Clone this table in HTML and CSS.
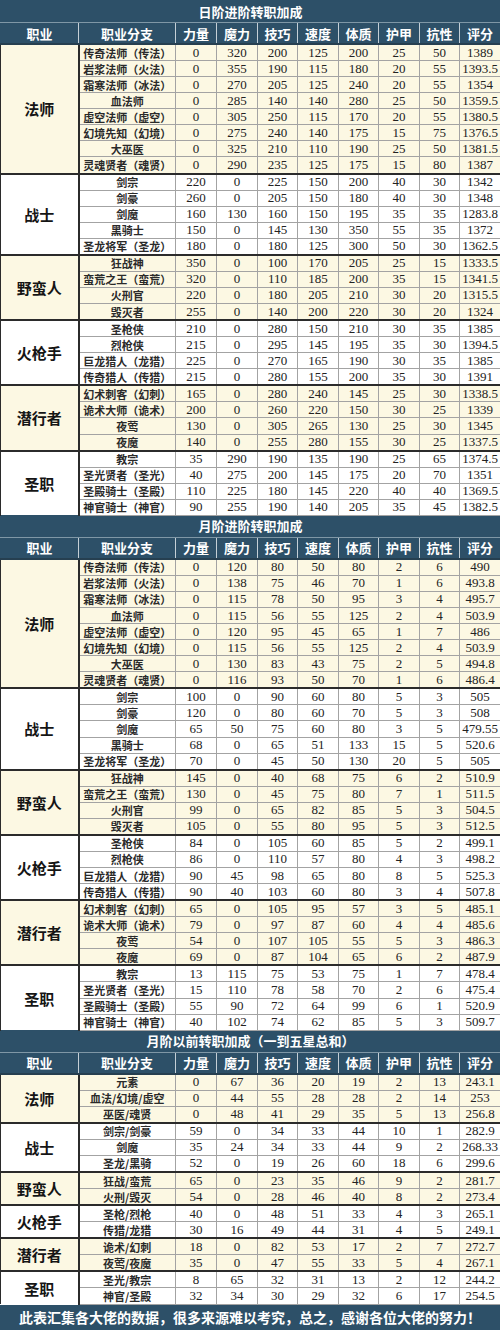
FILE: index.html
```html
<!DOCTYPE html>
<html lang="zh-CN">
<head>
<meta charset="utf-8">
<title>转职加成</title>
<link rel="stylesheet" href="styles.css">
</head>
<body>
<table class="sheet">
<colgroup>
<col class="c-job"><col class="c-br"><col class="c-n"><col class="c-n2"><col class="c-n3"><col class="c-n2"><col class="c-n3"><col class="c-n2"><col class="c-n3"><col class="c-n2">
</colgroup>
<tbody class="top">
<tr class="title"><td colspan="10">日阶进阶转职加成</td></tr>
<tr class="head"><th>职业</th><th>职业分支</th><th>力量</th><th>魔力</th><th>技巧</th><th>速度</th><th>体质</th><th>护甲</th><th>抗性</th><th>评分</th></tr>
</tbody>
<tbody class="g y">
<tr><th class="grp" rowspan="8">法师</th><td class="br">传奇法师（传法）</td><td>0</td><td>320</td><td>200</td><td>125</td><td>200</td><td>25</td><td>50</td><td>1389</td></tr>
<tr><td class="br">岩浆法师（火法）</td><td>0</td><td>355</td><td>190</td><td>115</td><td>180</td><td>20</td><td>55</td><td>1393.5</td></tr>
<tr><td class="br">霜寒法师（冰法）</td><td>0</td><td>270</td><td>205</td><td>125</td><td>240</td><td>20</td><td>55</td><td>1354</td></tr>
<tr><td class="br">血法师</td><td>0</td><td>285</td><td>140</td><td>140</td><td>280</td><td>25</td><td>50</td><td>1359.5</td></tr>
<tr><td class="br">虚空法师（虚空）</td><td>0</td><td>305</td><td>250</td><td>115</td><td>170</td><td>20</td><td>55</td><td>1380.5</td></tr>
<tr><td class="br">幻境先知（幻境）</td><td>0</td><td>275</td><td>240</td><td>140</td><td>175</td><td>15</td><td>75</td><td>1376.5</td></tr>
<tr><td class="br">大巫医</td><td>0</td><td>325</td><td>210</td><td>110</td><td>190</td><td>25</td><td>50</td><td>1381.5</td></tr>
<tr><td class="br">灵魂贤者（魂贤）</td><td>0</td><td>290</td><td>235</td><td>125</td><td>175</td><td>15</td><td>80</td><td>1387</td></tr>
</tbody>
<tbody class="g">
<tr><th class="grp" rowspan="5">战士</th><td class="br">剑宗</td><td>220</td><td>0</td><td>225</td><td>150</td><td>200</td><td>40</td><td>30</td><td>1342</td></tr>
<tr><td class="br">剑豪</td><td>260</td><td>0</td><td>205</td><td>150</td><td>180</td><td>40</td><td>30</td><td>1348</td></tr>
<tr><td class="br">剑魔</td><td>160</td><td>130</td><td>160</td><td>150</td><td>195</td><td>35</td><td>35</td><td>1283.8</td></tr>
<tr><td class="br">黑骑士</td><td>150</td><td>0</td><td>145</td><td>130</td><td>350</td><td>55</td><td>35</td><td>1372</td></tr>
<tr><td class="br">圣龙将军（圣龙）</td><td>180</td><td>0</td><td>180</td><td>125</td><td>300</td><td>50</td><td>30</td><td>1362.5</td></tr>
</tbody>
<tbody class="g y">
<tr><th class="grp" rowspan="4">野蛮人</th><td class="br">狂战神</td><td>350</td><td>0</td><td>100</td><td>170</td><td>205</td><td>25</td><td>15</td><td>1333.5</td></tr>
<tr><td class="br">蛮荒之王（蛮荒）</td><td>320</td><td>0</td><td>110</td><td>185</td><td>200</td><td>35</td><td>15</td><td>1341.5</td></tr>
<tr><td class="br">火刑官</td><td>220</td><td>0</td><td>180</td><td>205</td><td>210</td><td>30</td><td>20</td><td>1315.5</td></tr>
<tr><td class="br">毁灭者</td><td>255</td><td>0</td><td>140</td><td>200</td><td>220</td><td>30</td><td>20</td><td>1324</td></tr>
</tbody>
<tbody class="g">
<tr><th class="grp" rowspan="4">火枪手</th><td class="br">圣枪侠</td><td>210</td><td>0</td><td>280</td><td>150</td><td>210</td><td>30</td><td>35</td><td>1385</td></tr>
<tr><td class="br">烈枪侠</td><td>215</td><td>0</td><td>295</td><td>145</td><td>195</td><td>35</td><td>30</td><td>1394.5</td></tr>
<tr><td class="br">巨龙猎人（龙猎）</td><td>225</td><td>0</td><td>270</td><td>165</td><td>190</td><td>30</td><td>35</td><td>1385</td></tr>
<tr><td class="br">传奇猎人（传猎）</td><td>215</td><td>0</td><td>280</td><td>155</td><td>200</td><td>35</td><td>30</td><td>1391</td></tr>
</tbody>
<tbody class="g y">
<tr><th class="grp" rowspan="4">潜行者</th><td class="br">幻术刺客（幻刺）</td><td>165</td><td>0</td><td>280</td><td>240</td><td>145</td><td>25</td><td>30</td><td>1338.5</td></tr>
<tr><td class="br">诡术大师（诡术）</td><td>200</td><td>0</td><td>260</td><td>220</td><td>150</td><td>30</td><td>25</td><td>1339</td></tr>
<tr><td class="br">夜莺</td><td>130</td><td>0</td><td>305</td><td>265</td><td>130</td><td>25</td><td>30</td><td>1345</td></tr>
<tr><td class="br">夜魔</td><td>140</td><td>0</td><td>255</td><td>280</td><td>155</td><td>30</td><td>25</td><td>1337.5</td></tr>
</tbody>
<tbody class="g">
<tr><th class="grp" rowspan="4">圣职</th><td class="br">教宗</td><td>35</td><td>290</td><td>190</td><td>135</td><td>190</td><td>25</td><td>65</td><td>1374.5</td></tr>
<tr><td class="br">圣光贤者（圣光）</td><td>40</td><td>275</td><td>200</td><td>145</td><td>175</td><td>20</td><td>70</td><td>1351</td></tr>
<tr><td class="br">圣殿骑士（圣殿）</td><td>110</td><td>225</td><td>180</td><td>145</td><td>220</td><td>40</td><td>40</td><td>1369.5</td></tr>
<tr><td class="br">神官骑士（神官）</td><td>90</td><td>255</td><td>190</td><td>140</td><td>205</td><td>35</td><td>45</td><td>1382.5</td></tr>
</tbody>

<tbody class="top">
<tr class="title"><td colspan="10">月阶进阶转职加成</td></tr>
<tr class="head"><th>职业</th><th>职业分支</th><th>力量</th><th>魔力</th><th>技巧</th><th>速度</th><th>体质</th><th>护甲</th><th>抗性</th><th>评分</th></tr>
</tbody>
<tbody class="g y">
<tr><th class="grp" rowspan="8">法师</th><td class="br">传奇法师（传法）</td><td>0</td><td>120</td><td>80</td><td>50</td><td>80</td><td>2</td><td>6</td><td>490</td></tr>
<tr><td class="br">岩浆法师（火法）</td><td>0</td><td>138</td><td>75</td><td>46</td><td>70</td><td>1</td><td>6</td><td>493.8</td></tr>
<tr><td class="br">霜寒法师（冰法）</td><td>0</td><td>115</td><td>78</td><td>50</td><td>95</td><td>3</td><td>4</td><td>495.7</td></tr>
<tr><td class="br">血法师</td><td>0</td><td>115</td><td>56</td><td>55</td><td>125</td><td>2</td><td>4</td><td>503.9</td></tr>
<tr><td class="br">虚空法师（虚空）</td><td>0</td><td>120</td><td>95</td><td>45</td><td>65</td><td>1</td><td>7</td><td>486</td></tr>
<tr><td class="br">幻境先知（幻境）</td><td>0</td><td>115</td><td>56</td><td>55</td><td>125</td><td>2</td><td>4</td><td>503.9</td></tr>
<tr><td class="br">大巫医</td><td>0</td><td>130</td><td>83</td><td>43</td><td>75</td><td>2</td><td>5</td><td>494.8</td></tr>
<tr><td class="br">灵魂贤者（魂贤）</td><td>0</td><td>116</td><td>93</td><td>50</td><td>70</td><td>1</td><td>6</td><td>486.4</td></tr>
</tbody>
<tbody class="g">
<tr><th class="grp" rowspan="5">战士</th><td class="br">剑宗</td><td>100</td><td>0</td><td>90</td><td>60</td><td>80</td><td>5</td><td>3</td><td>505</td></tr>
<tr><td class="br">剑豪</td><td>120</td><td>0</td><td>80</td><td>60</td><td>70</td><td>5</td><td>3</td><td>508</td></tr>
<tr><td class="br">剑魔</td><td>65</td><td>50</td><td>75</td><td>60</td><td>80</td><td>3</td><td>5</td><td>479.55</td></tr>
<tr><td class="br">黑骑士</td><td>68</td><td>0</td><td>65</td><td>51</td><td>133</td><td>15</td><td>5</td><td>520.6</td></tr>
<tr><td class="br">圣龙将军（圣龙）</td><td>70</td><td>0</td><td>45</td><td>50</td><td>130</td><td>20</td><td>5</td><td>505</td></tr>
</tbody>
<tbody class="g y">
<tr><th class="grp" rowspan="4">野蛮人</th><td class="br">狂战神</td><td>145</td><td>0</td><td>40</td><td>68</td><td>75</td><td>6</td><td>2</td><td>510.9</td></tr>
<tr><td class="br">蛮荒之王（蛮荒）</td><td>130</td><td>0</td><td>45</td><td>75</td><td>80</td><td>7</td><td>1</td><td>511.5</td></tr>
<tr><td class="br">火刑官</td><td>99</td><td>0</td><td>65</td><td>82</td><td>85</td><td>5</td><td>3</td><td>504.5</td></tr>
<tr><td class="br">毁灭者</td><td>105</td><td>0</td><td>55</td><td>80</td><td>95</td><td>5</td><td>3</td><td>512.5</td></tr>
</tbody>
<tbody class="g">
<tr><th class="grp" rowspan="4">火枪手</th><td class="br">圣枪侠</td><td>84</td><td>0</td><td>105</td><td>60</td><td>85</td><td>5</td><td>2</td><td>499.1</td></tr>
<tr><td class="br">烈枪侠</td><td>86</td><td>0</td><td>110</td><td>57</td><td>80</td><td>4</td><td>3</td><td>498.2</td></tr>
<tr><td class="br">巨龙猎人（龙猎）</td><td>90</td><td>45</td><td>98</td><td>65</td><td>80</td><td>8</td><td>5</td><td>525.3</td></tr>
<tr><td class="br">传奇猎人（传猎）</td><td>90</td><td>40</td><td>103</td><td>60</td><td>80</td><td>3</td><td>4</td><td>507.8</td></tr>
</tbody>
<tbody class="g y">
<tr><th class="grp" rowspan="4">潜行者</th><td class="br">幻术刺客（幻刺）</td><td>65</td><td>0</td><td>105</td><td>95</td><td>57</td><td>3</td><td>5</td><td>485.1</td></tr>
<tr><td class="br">诡术大师（诡术）</td><td>79</td><td>0</td><td>97</td><td>87</td><td>60</td><td>4</td><td>4</td><td>485.6</td></tr>
<tr><td class="br">夜莺</td><td>54</td><td>0</td><td>107</td><td>105</td><td>55</td><td>5</td><td>3</td><td>486.3</td></tr>
<tr><td class="br">夜魔</td><td>69</td><td>0</td><td>87</td><td>104</td><td>65</td><td>6</td><td>2</td><td>487.9</td></tr>
</tbody>
<tbody class="g">
<tr><th class="grp" rowspan="4">圣职</th><td class="br">教宗</td><td>13</td><td>115</td><td>75</td><td>53</td><td>75</td><td>1</td><td>7</td><td>478.4</td></tr>
<tr><td class="br">圣光贤者（圣光）</td><td>15</td><td>110</td><td>78</td><td>58</td><td>70</td><td>2</td><td>6</td><td>475.4</td></tr>
<tr><td class="br">圣殿骑士（圣殿）</td><td>55</td><td>90</td><td>72</td><td>64</td><td>99</td><td>6</td><td>1</td><td>520.9</td></tr>
<tr><td class="br">神官骑士（神官）</td><td>40</td><td>102</td><td>74</td><td>62</td><td>85</td><td>5</td><td>3</td><td>509.7</td></tr>
</tbody>

<tbody class="top">
<tr class="title"><td colspan="10">月阶以前转职加成（一到五星总和）</td></tr>
<tr class="head"><th>职业</th><th>职业分支</th><th>力量</th><th>魔力</th><th>技巧</th><th>速度</th><th>体质</th><th>护甲</th><th>抗性</th><th>评分</th></tr>
</tbody>
<tbody class="g y">
<tr><th class="grp" rowspan="3">法师</th><td class="br">元素</td><td>0</td><td>67</td><td>36</td><td>20</td><td>19</td><td>2</td><td>13</td><td>243.1</td></tr>
<tr><td class="br">血法/幻境/虚空</td><td>0</td><td>44</td><td>55</td><td>28</td><td>28</td><td>2</td><td>14</td><td>253</td></tr>
<tr><td class="br">巫医/魂贤</td><td>0</td><td>48</td><td>41</td><td>29</td><td>35</td><td>5</td><td>13</td><td>256.8</td></tr>
</tbody>
<tbody class="g">
<tr><th class="grp" rowspan="3">战士</th><td class="br">剑宗/剑豪</td><td>59</td><td>0</td><td>34</td><td>33</td><td>44</td><td>10</td><td>1</td><td>282.9</td></tr>
<tr><td class="br">剑魔</td><td>35</td><td>24</td><td>34</td><td>33</td><td>44</td><td>9</td><td>2</td><td>268.33</td></tr>
<tr><td class="br">圣龙/黑骑</td><td>52</td><td>0</td><td>19</td><td>26</td><td>60</td><td>18</td><td>6</td><td>299.6</td></tr>
</tbody>
<tbody class="g y">
<tr><th class="grp" rowspan="2">野蛮人</th><td class="br">狂战/蛮荒</td><td>65</td><td>0</td><td>23</td><td>35</td><td>46</td><td>9</td><td>2</td><td>281.7</td></tr>
<tr><td class="br">火刑/毁灭</td><td>54</td><td>0</td><td>28</td><td>46</td><td>40</td><td>8</td><td>2</td><td>273.4</td></tr>
</tbody>
<tbody class="g">
<tr><th class="grp" rowspan="2">火枪手</th><td class="br">圣枪/烈枪</td><td>40</td><td>0</td><td>48</td><td>51</td><td>33</td><td>4</td><td>3</td><td>265.1</td></tr>
<tr><td class="br">传猎/龙猎</td><td>30</td><td>16</td><td>49</td><td>44</td><td>31</td><td>4</td><td>5</td><td>249.1</td></tr>
</tbody>
<tbody class="g y">
<tr><th class="grp" rowspan="2">潜行者</th><td class="br">诡术/幻刺</td><td>18</td><td>0</td><td>82</td><td>53</td><td>17</td><td>2</td><td>7</td><td>272.7</td></tr>
<tr><td class="br">夜莺/夜魔</td><td>35</td><td>0</td><td>47</td><td>55</td><td>33</td><td>5</td><td>4</td><td>267.1</td></tr>
</tbody>
<tbody class="g">
<tr><th class="grp" rowspan="2">圣职</th><td class="br">圣光/教宗</td><td>8</td><td>65</td><td>32</td><td>31</td><td>13</td><td>2</td><td>12</td><td>244.2</td></tr>
<tr><td class="br">神官/圣殿</td><td>32</td><td>34</td><td>30</td><td>29</td><td>32</td><td>6</td><td>17</td><td>254.5</td></tr>
</tbody>
</table>
<div class="footer">此表汇集各大佬的数据，很多来源难以考究，总之，感谢各位大佬的努力！</div>
</body>
</html>
```

FILE: styles.css
```css
html, body {
  margin: 0;
  padding: 0;
  background: #ffffff;
}

.sheet {
  width: 500px;
  border-collapse: collapse;
  table-layout: fixed;
  font-family: "Liberation Serif", "Noto Sans CJK SC", serif;
  color: #222222;
}

.c-job { width: 78px; }
.c-br { width: 97px; }
.c-n { width: 41px; }
.c-n2 { width: 41px; }
.c-n3 { width: 40px; }

.title td {
  height: 21px;
  padding: 0;
  background: #2d5068;
  color: #ffffff;
  text-align: center;
  font-family: "Noto Sans CJK SC", sans-serif;
  font-weight: 700;
  font-size: 13px;
  line-height: 20px;
  border: 1px solid #2d5068;
  border-bottom: 1px solid #7f97a6;
}

.head th {
  height: 20px;
  padding: 0;
  background: #2d5068;
  color: #ffffff;
  text-align: center;
  font-family: "Noto Sans CJK SC", sans-serif;
  font-weight: 700;
  font-size: 13px;
  line-height: 19px;
  border: 1px solid #c4cfd6;
  border-top: 1px solid #7f97a6;
  border-bottom: 2px solid #263f50;
}

.head th:first-child { border-left: 1px solid #2d5068; }
.head th:last-child { border-right: 1px solid #2d5068; }

.g {
  border-top: 2px solid #2b2b2b;
}

.g td {
  height: 15.07px;
  padding: 0;
  text-align: center;
  font-size: 13px;
  line-height: 14px;
  border: 1px solid #a3a3a3;
  white-space: nowrap;
  overflow: hidden;
}

.g td:last-child { border-right: 1px solid #555555; }

.g td.br {
  font-family: "Noto Sans CJK SC", sans-serif;
  font-size: 11px;
  font-weight: 700;
  color: #2a2a2a;
}

.y td, .y th {
  background: #fcf8e3;
}

.grp {
  padding: 0;
  text-align: center;
  vertical-align: middle;
  font-family: "Noto Sans CJK SC", sans-serif;
  font-size: 15px;
  font-weight: 700;
  color: #151515;
  border-left: 1px solid #2b2b2b;
  border-right: 2px solid #2b2b2b;
}

.footer {
  height: 25px;
  background: #2d5068;
  color: #ffffff;
  text-align: center;
  font-family: "Noto Sans CJK SC", sans-serif;
  font-weight: 700;
  font-size: 14px;
  line-height: 25px;
  white-space: nowrap;
  overflow: hidden;
}
```
